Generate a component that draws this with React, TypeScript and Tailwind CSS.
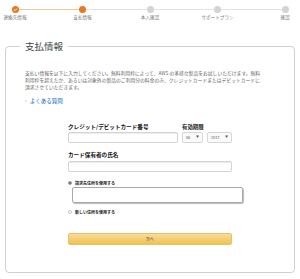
import React from "react";

const steps = [
  { label: "連絡先情報", done: true },
  { label: "支払情報", done: true },
  { label: "本人確認", done: false },
  { label: "サポートプラン", done: false },
  { label: "確認", done: false },
];

const jp = { fontFamily: '"Noto Sans CJK JP", "Noto Sans", sans-serif' };

export default function App() {
  return (
    <div className="w-[300px] h-[279px] bg-white overflow-hidden" style={jp}>
      {/* progress */}
      <div className="relative h-[25px]">
        <div className="absolute left-[15px] right-[14px] top-[8.5px] h-px bg-[#e3e3e3]" />
        <div className="absolute left-[15px] w-[68px] top-[8.5px] h-px bg-[#f1c79c]" />
        <div className="relative flex justify-between">
          {steps.map((s, i) => (
            <div key={s.label} className="w-[30px] flex flex-col items-center pt-[5.5px]">
              <div
                className={
                  "w-[7px] h-[7px] rounded-full flex items-center justify-center " +
                  (s.done ? "bg-[#e8791f]" : "bg-[#d4d4d4]")
                }
              >
                {i === 0 && (
                  <svg width="5" height="5" viewBox="0 0 10 10">
                    <path d="M2 5.2 L4.2 7.2 L8 3" stroke="#fff" strokeWidth="1.6" fill="none" />
                  </svg>
                )}
              </div>
              <div className="mt-[2.5px] text-[4.6px] leading-[5px] whitespace-nowrap text-[#777]">
                {s.label}
              </div>
            </div>
          ))}
        </div>
      </div>

      {/* panel */}
      <fieldset className="mt-[16px] ml-[5px] w-[290px] border border-[#d0d0d0] rounded-[4px] pb-[27px]">
        <legend className="ml-[14px] px-[5px] text-[9.5px] leading-[10px] text-[#444]">支払情報</legend>

        <div className="pl-[19px]">
          <p className="mt-[18px] text-[4.8px] leading-[7px] text-[#666] whitespace-nowrap">
            支払い情報を以下に入力してください。無料利用枠によって、AWS の多様な製品をお試しいただけます。無料
            <br />
            利用枠を超えたか、あるいは対象外の製品のご利用分の料金のみ、クレジットカードまたはデビットカードに
            <br />
            請求させていただきます。
          </p>
          <div className="mt-[7.5px] flex items-center text-[5.5px] leading-[7px] text-[#0066c0]">
            <span className="text-[#777] mr-[3px]">›</span>
            <span>よくある質問</span>
          </div>

          {/* form */}
          <div className="ml-[43px] w-[164px] mt-[19.5px]">
            <div className="flex gap-[4px]">
              <div className="w-[110px]">
                <div className="text-[5.6px] leading-[6px] font-bold text-[#111] whitespace-nowrap">
                  クレジット/デビットカード番号
                </div>
                <div className="mt-[2px] h-[11px] border border-[#d3d3d3] rounded-[2px] shadow-[inset_0_1px_0_#eee]" />
              </div>
              <div>
                <div className="text-[5.4px] leading-[6px] font-bold text-[#111] whitespace-nowrap">有効期限</div>
                <div className="mt-[2px] flex gap-[4px]">
                  <div className="w-[21px] h-[11px] border border-[#d6d6d6] rounded-[2px] bg-[#fafafa] flex items-center justify-between px-[3px] text-[3.8px] text-[#555]">
                    <span>06</span>
                    <span className="text-[3px]">▼</span>
                  </div>
                  <div className="w-[25px] h-[11px] border border-[#d6d6d6] rounded-[2px] bg-[#fafafa] flex items-center justify-between px-[3px] text-[3.8px] text-[#555]">
                    <span>2017</span>
                    <span className="text-[3px]">▼</span>
                  </div>
                </div>
              </div>
            </div>

            <div className="mt-[9px] text-[5.6px] leading-[6px] font-bold text-[#111] whitespace-nowrap">
              カード保有者の氏名
            </div>
            <div className="mt-[3px] h-[11px] border border-[#d3d3d3] rounded-[2px] shadow-[inset_0_1px_0_#eee]" />

            <div className="mt-[8px] flex items-center h-[6px] text-[4px] font-bold text-[#222] whitespace-nowrap">
              <div className="w-[4px] h-[4px] rounded-full border border-[#999] flex items-center justify-center mr-[3px]">
                <div className="w-[2px] h-[2px] rounded-full bg-[#555]" />
              </div>
              請求先住所を使用する
            </div>
            <div className="mt-[1px] ml-[4px] w-[171px] h-[16px] border border-[#a9a9a9] rounded-[2px] shadow-[1px_1px_1px_#bbb]" />

            <div className="mt-[6px] flex items-center h-[6px] text-[4px] font-bold text-[#222] whitespace-nowrap">
              <div className="w-[4px] h-[4px] rounded-full border border-[#c8c8c8] mr-[3px]" />
              新しい住所を使用する
            </div>

            <div className="mt-[18px] h-[12px] rounded-[2px] border border-[#e6c169] bg-gradient-to-b from-[#f8dc97] to-[#f0c14b] flex items-center justify-center text-[4px] text-[#333]">
              次へ
            </div>
          </div>
        </div>
      </fieldset>
    </div>
  );
}
